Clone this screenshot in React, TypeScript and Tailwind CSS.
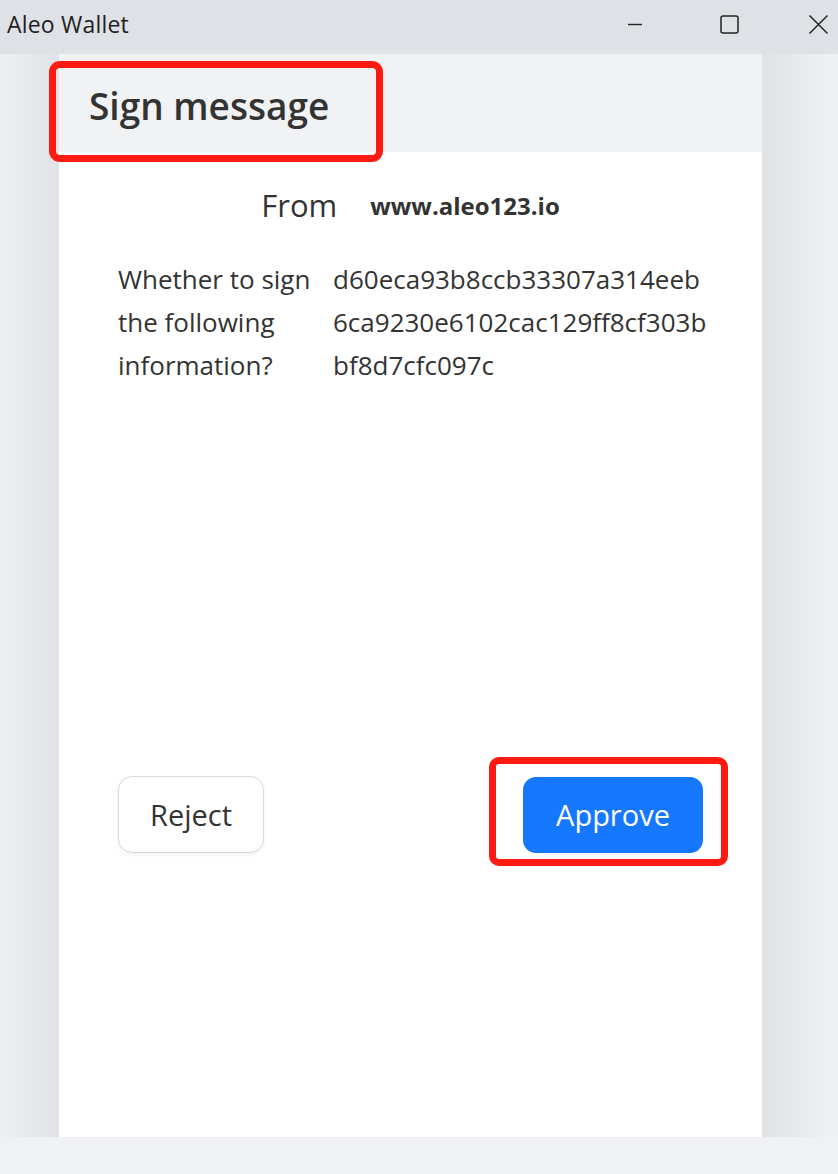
import React from "react";

const font = { fontFamily: '"Open Sans", "Noto Sans", sans-serif' };

function TitleBar() {
  return (
    <div className="flex h-[54px] items-center bg-[#dee1e6] pl-[7px] text-[#1f1f1f]">
      <span className="pb-[5px] text-[23px] leading-none tracking-[0.2px]">Aleo Wallet</span>
      <div className="ml-auto flex h-full items-center pb-[6px]">
        <div className="flex h-full w-[94px] items-center justify-center">
          <svg width="16" height="16" viewBox="0 0 16 16">
            <path d="M1 8.5h14" stroke="#222" strokeWidth="1.4" />
          </svg>
        </div>
        <div className="flex h-full w-[94px] items-center justify-center">
          <svg width="19" height="19" viewBox="0 0 19 19">
            <rect x="1" y="1" width="17" height="17" rx="2" fill="none" stroke="#222" strokeWidth="1.5" />
          </svg>
        </div>
        <div className="w-[22px]" />
        <div className="flex h-full w-[40px] items-center justify-center">
          <svg width="21" height="21" viewBox="0 0 21 21">
            <path d="M1.5 1.5l18 18M19.5 1.5l-18 18" stroke="#222" strokeWidth="1.5" />
          </svg>
        </div>
      </div>
    </div>
  );
}

export default function App() {
  return (
    <div className="relative flex h-[1174px] w-[838px] flex-col overflow-hidden bg-[#f0f1f4]" style={font}>
      <TitleBar />
      <div className="flex h-[1083px]">
        <div className="w-[59px] bg-gradient-to-r from-[#eeeff2] to-[#e1e2e6]" />
        <div className="flex w-[703px] flex-col bg-white">
          <div className="flex h-[98px] items-center bg-[#f1f2f4] pl-[30px] pt-[5px]">
            <h1 className="text-[37px] font-semibold leading-none text-[#333]">Sign message</h1>
          </div>
          <div className="mt-[38px] flex items-center justify-center gap-[33px]">
            <span className="text-[31px] leading-none text-[#333]">From</span>
            <span className="text-[24px] font-bold leading-none text-[#333]">www.aleo123.io</span>
          </div>
          <div className="mt-[37px] grid grid-cols-[215px_1fr] px-[59px] text-[26px] leading-[43px] text-[#333]">
            <div>
              <div>Whether to sign</div>
              <div>the following</div>
              <div>information?</div>
            </div>
            <div>
              <div>d60eca93b8ccb33307a314eeb</div>
              <div>6ca9230e6102cac129ff8cf303b</div>
              <div>bf8d7cfc097c</div>
            </div>
          </div>
          <div className="mt-[389px] flex items-center justify-between px-[59px]">
            <button className="flex h-[77px] w-[146px] items-center justify-center rounded-[14px] border border-[#d9d9d9] bg-white text-[29px] text-[#333] shadow-[0_2px_4px_rgba(0,0,0,0.06)]">
              Reject
            </button>
            <button className="flex h-[76px] w-[180px] items-center justify-center rounded-[13px] bg-[#1677ff] text-[29px] text-white">
              Approve
            </button>
          </div>
        </div>
        <div className="flex-1 bg-gradient-to-r from-[#e1e2e6] to-[#f0f1f4]" />
      </div>
      <div className="flex-1 bg-[#f0f1f4]" />

      {/* red annotation boxes */}
      <div className="pointer-events-none absolute left-[49px] top-[61px] h-[101px] w-[334px] rounded-[11px] border-[7px] border-[#ff1a12]" />
      <div className="pointer-events-none absolute left-[489px] top-[757px] h-[109px] w-[239px] rounded-[10px] border-[7px] border-[#ff1a12]" />
    </div>
  );
}
